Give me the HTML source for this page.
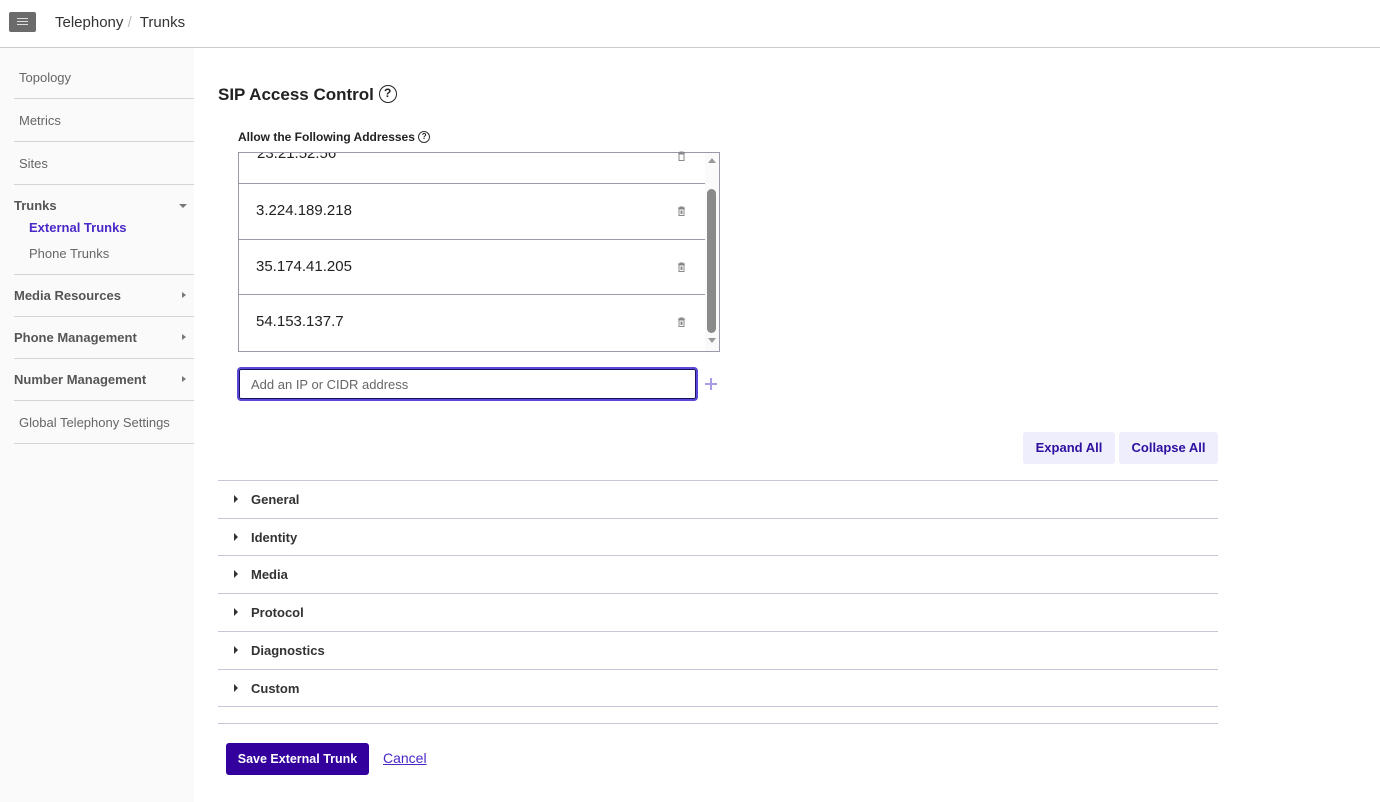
<!DOCTYPE html>
<html><head><meta charset="utf-8"><style>
*{box-sizing:border-box;margin:0;padding:0}
body{width:1380px;height:802px;position:relative;background:#fff;font-family:"Liberation Sans",sans-serif;color:#222;overflow:hidden}
.a{position:absolute;white-space:nowrap}
.hr{position:absolute;height:1px;background:#d4d4d4}
.sb{font-size:13px;color:#666}
.sbb{font-size:13px;font-weight:bold;color:#555}
.acc{position:absolute;left:218px;width:1000px;height:1px;background:#c8c6d8}
.at{position:absolute;left:251px;font-size:13px;font-weight:bold;color:#333}
.tri{position:absolute;left:234px;width:0;height:0;border-left:4px solid #333;border-top:4px solid transparent;border-bottom:4px solid transparent}
.ip{position:absolute;left:256px;font-size:15px;color:#222}
.row{position:absolute;left:239px;width:466px;height:1px;background:#9a9aaa}
.trash{position:absolute;left:677px;width:9px;height:10px}
.q{display:inline-block;vertical-align:middle;border-style:solid;border-color:#222;border-radius:50%;text-align:center;font-weight:bold}
</style></head><body>
<div class="a" style="left:9px;top:12px;width:27px;height:20px;background:#6b6b6b;border-radius:2px"></div>
<div class="a" style="left:17px;top:18px;width:11px;height:1px;background:#ddd;box-shadow:0 3px 0 #ddd,0 6px 0 #ddd"></div>
<div class="a" style="left:55px;top:14px;font-size:15px;color:#333">Telephony <span style="color:#bbb">/</span>&nbsp; Trunks</div>
<div class="hr" style="left:0;top:47px;width:1380px;background:#ccc"></div>
<div class="a" style="left:0;top:48px;width:194px;height:754px;background:#fafafa"></div>
<div class="a sb" style="left:19px;top:70px">Topology</div>
<div class="hr" style="left:14px;top:98px;width:180px"></div>
<div class="a sb" style="left:19px;top:113px">Metrics</div>
<div class="hr" style="left:14px;top:141px;width:180px"></div>
<div class="a sb" style="left:19px;top:156px">Sites</div>
<div class="hr" style="left:14px;top:184px;width:180px"></div>
<div class="a sbb" style="left:14px;top:198px">Trunks</div>
<div class="a" style="left:179px;top:204px;border-top:4px solid #777;border-left:4px solid transparent;border-right:4px solid transparent"></div>
<div class="a" style="left:29px;top:220px;font-size:13px;font-weight:bold;color:#4a28c8">External Trunks</div>
<div class="a sb" style="left:29px;top:246px">Phone Trunks</div>
<div class="hr" style="left:14px;top:274px;width:180px"></div>
<div class="a sbb" style="left:14px;top:288px">Media Resources</div>
<div class="a" style="left:182px;top:292px;border-left:4px solid #777;border-top:3.5px solid transparent;border-bottom:3.5px solid transparent"></div>
<div class="hr" style="left:14px;top:316px;width:180px"></div>
<div class="a sbb" style="left:14px;top:330px">Phone Management</div>
<div class="a" style="left:182px;top:334px;border-left:4px solid #777;border-top:3.5px solid transparent;border-bottom:3.5px solid transparent"></div>
<div class="hr" style="left:14px;top:358px;width:180px"></div>
<div class="a sbb" style="left:14px;top:372px">Number Management</div>
<div class="a" style="left:182px;top:376px;border-left:4px solid #777;border-top:3.5px solid transparent;border-bottom:3.5px solid transparent"></div>
<div class="hr" style="left:14px;top:400px;width:180px"></div>
<div class="a sb" style="left:19px;top:415px">Global Telephony Settings</div>
<div class="hr" style="left:14px;top:443px;width:180px"></div>

<div class="a" style="left:218px;top:85px;font-size:17px;font-weight:bold;color:#222">SIP Access Control <span class="q" style="width:18px;height:18px;border-width:1.6px;font-size:12px;line-height:15px;margin-top:-3px">?</span></div>
<div class="a" style="left:238px;top:130px;font-size:12px;font-weight:bold;color:#222">Allow the Following Addresses <span class="q" style="width:12px;height:12px;border-width:1.2px;font-size:8px;line-height:10px;margin-top:-2px;border-color:#333">?</span></div>

<div class="a" style="left:238px;top:152px;width:482px;height:200px;border:1px solid #9a9aaa;overflow:hidden">
<div class="a" style="left:18px;top:-8px;font-size:15px">23.21.52.56</div>
</div>
<div class="row" style="top:183px"></div>
<div class="row" style="top:239px"></div>
<div class="row" style="top:294px"></div>
<div class="ip" style="top:202px">3.224.189.218</div>
<div class="ip" style="top:258px">35.174.41.205</div>
<div class="ip" style="top:313px">54.153.137.7</div>
<svg class="trash" style="top:151px" viewBox="0 0 9 10"><path d="M1 2h7M3 2V1h3v1M2 3h5v6.5H2z" fill="none" stroke="#888" stroke-width="1"/></svg>
<svg class="trash" style="top:206px" viewBox="0 0 9 10"><path d="M1 2h7M3 2V1h3v1M2 3h5v6.5H2zM4 4.5v3.5M5 4.5v3.5" fill="none" stroke="#888" stroke-width="1"/></svg>
<svg class="trash" style="top:262px" viewBox="0 0 9 10"><path d="M1 2h7M3 2V1h3v1M2 3h5v6.5H2zM4 4.5v3.5M5 4.5v3.5" fill="none" stroke="#888" stroke-width="1"/></svg>
<svg class="trash" style="top:317px" viewBox="0 0 9 10"><path d="M1 2h7M3 2V1h3v1M2 3h5v6.5H2zM4 4.5v3.5M5 4.5v3.5" fill="none" stroke="#888" stroke-width="1"/></svg>
<div class="a" style="left:705px;top:153px;width:14px;height:198px;background:#fafafa"></div>
<div class="a" style="left:708px;top:158px;border-bottom:5px solid #999;border-left:4px solid transparent;border-right:4px solid transparent"></div>
<div class="a" style="left:708px;top:338px;border-top:5px solid #999;border-left:4px solid transparent;border-right:4px solid transparent"></div>
<div class="a" style="left:707px;top:189px;width:9px;height:144px;background:#8a8a8a;border-radius:5px"></div>

<div class="a" style="left:237px;top:367px;width:461px;height:34px;border:2px solid #5a48d8;border-radius:4px;box-shadow:inset 0 0 0 1px #1a1060"></div>
<div class="a" style="left:251px;top:377px;font-size:13px;color:#666">Add an IP or CIDR address</div>
<div class="a" style="left:705px;top:383px;width:12px;height:1.5px;background:#a99be8"></div>
<div class="a" style="left:710px;top:378px;width:1.5px;height:12px;background:#a99be8"></div>

<div class="a" style="left:1023px;top:432px;width:92px;height:32px;background:#eeeefc;border-radius:3px;font-size:13px;font-weight:bold;color:#2e0f9e;text-align:center;line-height:32px">Expand All</div>
<div class="a" style="left:1119px;top:432px;width:99px;height:32px;background:#eeeefc;border-radius:3px;font-size:13px;font-weight:bold;color:#2e0f9e;text-align:center;line-height:32px">Collapse All</div>

<div class="acc" style="top:480px"></div>
<div class="tri" style="top:495px"></div><div class="at" style="top:492px">General</div>
<div class="acc" style="top:518px"></div>
<div class="tri" style="top:533px"></div><div class="at" style="top:530px">Identity</div>
<div class="acc" style="top:555px"></div>
<div class="tri" style="top:570px"></div><div class="at" style="top:567px">Media</div>
<div class="acc" style="top:593px"></div>
<div class="tri" style="top:608px"></div><div class="at" style="top:605px">Protocol</div>
<div class="acc" style="top:631px"></div>
<div class="tri" style="top:646px"></div><div class="at" style="top:643px">Diagnostics</div>
<div class="acc" style="top:669px"></div>
<div class="tri" style="top:684px"></div><div class="at" style="top:681px">Custom</div>
<div class="acc" style="top:706px"></div>
<div class="acc" style="top:723px"></div>

<div class="a" style="left:226px;top:743px;width:143px;height:32px;background:#33009d;border-radius:3px;color:#fff;font-size:12.5px;font-weight:bold;text-align:center;line-height:32px">Save External Trunk</div>
<div class="a" style="left:383px;top:750px;font-size:14px;color:#4a28c8;text-decoration:underline">Cancel</div>
</body></html>
